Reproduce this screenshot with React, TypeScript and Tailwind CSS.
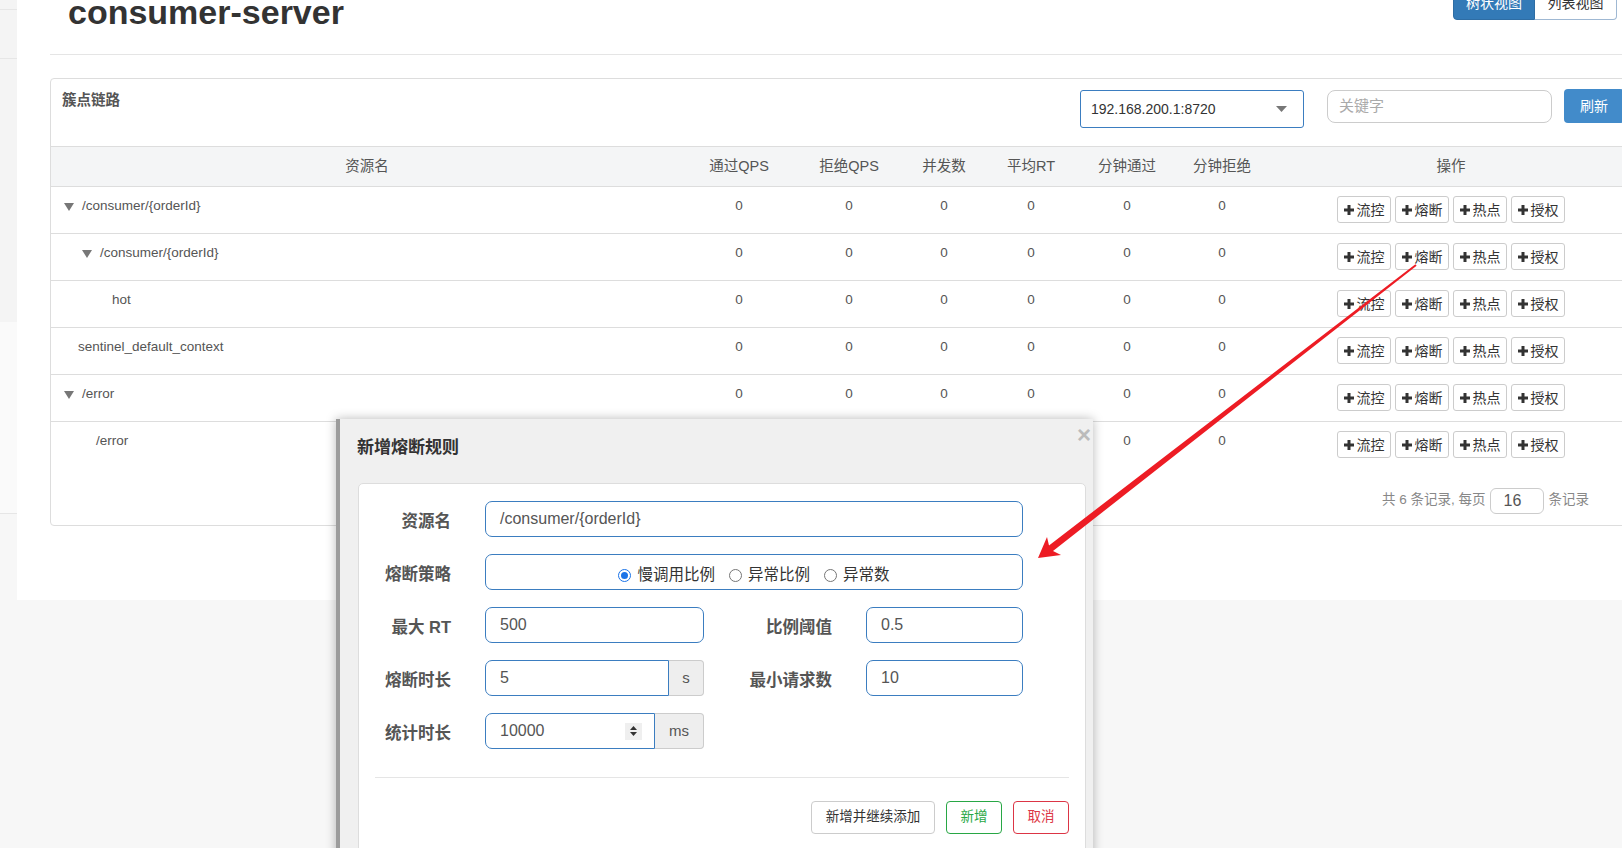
import React from "react";

const headers = ["资源名", "通过QPS", "拒绝QPS", "并发数", "平均RT", "分钟通过", "分钟拒绝", "操作"];

const rows = [
  { name: "/consumer/{orderId}", tri: true, pad: "pl-[13px]" },
  { name: "/consumer/{orderId}", tri: true, pad: "pl-[31px]" },
  { name: "hot", tri: false, pad: "pl-[61px]" },
  { name: "sentinel_default_context", tri: false, pad: "pl-[27px]" },
  { name: "/error", tri: true, pad: "pl-[13px]" },
  { name: "/error", tri: false, pad: "pl-[45px]" },
];

const cols = "grid grid-cols-[632px_112px_108px_82px_92px_100px_90px_368px]";

function Plus() {
  return (
    <svg width="10" height="10" viewBox="0 0 10 10" className="shrink-0">
      <rect x="3.5" y="0" width="3" height="10" fill="#333" />
      <rect x="0" y="3.5" width="10" height="3" fill="#333" />
    </svg>
  );
}

function Caret() {
  return (
    <svg width="10" height="8" viewBox="0 0 10 8" className="shrink-0 mt-[6px] mr-[8px]">
      <path d="M0 0h10L5 8z" fill="#777" />
    </svg>
  );
}

function OpButton({ label }: { label: string }) {
  return (
    <div className="flex h-[27px] w-[54px] items-center justify-center gap-[3px] rounded-[3px] border border-[#ccc] bg-white text-[14px] leading-none text-[#333]">
      <Plus />
      <span>{label}</span>
    </div>
  );
}

function Radio({ checked, label }: { checked?: boolean; label: string }) {
  return (
    <div className="flex items-center gap-[6px]">
      {checked ? (
        <span className="flex h-[13px] w-[13px] items-center justify-center rounded-full border-[1.5px] border-[#1a73e8] bg-white">
          <span className="h-[7px] w-[7px] rounded-full bg-[#1a73e8]" />
        </span>
      ) : (
        <span className="h-[13px] w-[13px] rounded-full border border-[#767676] bg-white" />
      )}
      <span className="text-[15.5px] leading-none text-[#333]">{label}</span>
    </div>
  );
}

function Label({ text, w }: { text: string; w: string }) {
  return <div className={`${w} mt-[5px] shrink-0 text-right text-[16.5px] font-bold leading-none text-[#555]`}>{text}</div>;
}

function LeftStrip() {
  return (
    <aside className="w-[17px] shrink-0">
      <div className="h-[322px] bg-[#f4f4f4]">
        <div className="h-[10px] border-b border-[#e6e6e6]" />
        <div className="h-[49px] border-b border-[#e6e6e6]" />
      </div>
      <div className="h-[192px] border-b border-[#e6e6e6] bg-[#fafafa]" />
    </aside>
  );
}

export default function App() {
  return (
    <div className="relative h-[848px] w-[1622px] overflow-hidden bg-[#f7f7f7] font-['Liberation_Sans','Noto_Sans_CJK_SC',sans-serif] text-[#555]">
      <div className="flex h-[600px]">
        <LeftStrip />
        <main className="min-w-0 flex-1 bg-white pl-[33px]">
          <header className="flex h-[55px] items-start justify-between border-b border-[#e5e5e5]">
            <h1 className="-mt-[5px] pl-[18px] text-[34px] font-bold leading-none text-[#333]">consumer-server</h1>
            <div className="-mt-[14px] mr-[5px] flex h-[34px] text-[14px]">
              <div className="flex w-[82px] items-center justify-center rounded-bl-[4px] border border-[#2e6da4] bg-[#337ab7] text-white">树状视图</div>
              <div className="flex w-[82px] items-center justify-center rounded-br-[4px] border border-l-0 border-[#9fb8d3] bg-white text-[#333]">列表视图</div>
            </div>
          </header>

          <section className="mt-[23px] w-[1586px] rounded-[4px] border border-[#ddd] bg-white">
            <div className="flex h-[67px] items-start justify-between px-[11px]">
              <div className="pt-[12px] text-[14.5px] font-bold leading-[18px] text-[#555]">簇点链路</div>
              <div className="mt-[11px] flex items-start">
                <div className="flex h-[38px] w-[224px] items-center justify-between rounded-[3px] border border-[#3b7dc0] pl-[10px] pr-[16px] text-[14px] text-[#333]">
                  <span>192.168.200.1:8720</span>
                  <svg width="11" height="6" viewBox="0 0 11 6">
                    <path d="M0 0h11L5.5 6z" fill="#777" />
                  </svg>
                </div>
                <div className="ml-[23px] flex h-[33px] w-[225px] items-center rounded-[8px] border border-[#ccc] pl-[11px] text-[15px] text-[#aaa]">关键字</div>
                <div className="-mt-[1px] ml-[12px] flex h-[34px] w-[60px] items-center justify-center rounded-[4px] bg-[#428bca] text-[14px] text-white">刷新</div>
              </div>
            </div>

            <div className={`${cols} h-[41px] items-center border-y border-[#ddd] bg-[#f4f5f6] text-[14.5px] text-[#555]`}>
              {headers.map((h) => (
                <div key={h} className="text-center">{h}</div>
              ))}
            </div>

            {rows.map((r, i) => (
              <div key={i} className={`${cols} h-[47px] text-[13.5px] leading-[18px] ${i < rows.length - 1 ? "border-b border-[#ddd]" : ""}`}>
                <div className={`flex items-start pt-[10px] ${r.pad}`}>
                  {r.tri && <Caret />}
                  <span>{r.name}</span>
                </div>
                {[0, 1, 2, 3, 4, 5].map((c) => (
                  <div key={c} className="pt-[10px] text-center">0</div>
                ))}
                <div className="flex justify-center gap-[4px] pt-[9px]">
                  <OpButton label="流控" />
                  <OpButton label="熔断" />
                  <OpButton label="热点" />
                  <OpButton label="授权" />
                </div>
              </div>
            ))}

            <div className="flex h-[56px] items-start justify-end pr-[46px] pt-[19px] text-[13.5px] text-[#888]">
              <span className="mt-[2px]">共 6 条记录, 每页</span>
              <div className="ml-[4px] flex h-[26px] w-[54px] items-center rounded-[6px] border border-[#ccc] pl-[13px] text-[16px] text-[#555]">16</div>
              <span className="ml-[5px] mt-[2px]">条记录</span>
            </div>
          </section>
        </main>
      </div>

      {/* modal */}
      <div className="absolute left-[336px] top-[419px] h-[440px] w-[757px] border-l-[4px] border-[#9c9c9c] bg-[#f0f0f0] shadow-[0_0_10px_rgba(0,0,0,0.28)]">
        <div className="h-[64px] pl-[17px] pt-[19px] text-[17px] font-bold leading-[20px] text-[#333]">新增熔断规则</div>
        <div className="absolute right-[2px] top-[4px] text-[24px] font-bold leading-none text-[#bbb]">×</div>

        <div className="ml-[18px] h-[380px] w-[728px] rounded-[5px] border border-[#ddd] bg-white pt-[17px]">
          <div className="flex h-[36px] items-center">
            <Label text="资源名" w="w-[92px]" />
            <div className="ml-[34px] flex h-[36px] w-[538px] items-center rounded-[7px] border border-[#3b7dc0] pl-[14px] text-[16px] text-[#555]">/consumer/{"{orderId}"}</div>
          </div>

          <div className="mt-[17px] flex h-[36px] items-center">
            <Label text="熔断策略" w="w-[92px]" />
            <div className="ml-[34px] flex h-[36px] w-[538px] items-center justify-center gap-[14px] rounded-[7px] border border-[#3b7dc0] pt-[6px]">
              <Radio checked label="慢调用比例" />
              <Radio label="异常比例" />
              <Radio label="异常数" />
            </div>
          </div>

          <div className="mt-[17px] flex h-[36px] items-center">
            <Label text="最大 RT" w="w-[92px]" />
            <div className="ml-[34px] flex h-[36px] w-[219px] items-center rounded-[7px] border border-[#3b7dc0] pl-[14px] text-[16px] text-[#555]">500</div>
            <Label text="比例阈值" w="w-[128px]" />
            <div className="ml-[34px] flex h-[36px] w-[157px] items-center rounded-[7px] border border-[#3b7dc0] pl-[14px] text-[16px] text-[#555]">0.5</div>
          </div>

          <div className="mt-[17px] flex h-[36px] items-center">
            <Label text="熔断时长" w="w-[92px]" />
            <div className="ml-[34px] flex h-[36px] w-[219px]">
              <div className="flex flex-1 items-center rounded-l-[7px] border border-[#3b7dc0] pl-[14px] text-[16px] text-[#555]">5</div>
              <div className="flex w-[35px] items-center justify-center rounded-r-[4px] border border-l-0 border-[#ccc] bg-[#eee] text-[15px] text-[#555]">s</div>
            </div>
            <Label text="最小请求数" w="w-[128px]" />
            <div className="ml-[34px] flex h-[36px] w-[157px] items-center rounded-[7px] border border-[#3b7dc0] pl-[14px] text-[16px] text-[#555]">10</div>
          </div>

          <div className="mt-[17px] flex h-[36px] items-center">
            <Label text="统计时长" w="w-[92px]" />
            <div className="ml-[34px] flex h-[36px] w-[219px]">
              <div className="flex flex-1 items-center justify-between rounded-l-[7px] border border-[#3b7dc0] pl-[14px] pr-[12px] text-[16px] text-[#555]">
                <span>10000</span>
                <span className="flex h-[17px] w-[17px] flex-col items-center justify-center gap-[2px] bg-[#efefef]">
                  <svg width="7" height="4" viewBox="0 0 7 4"><path d="M0 4h7L3.5 0z" fill="#333" /></svg>
                  <svg width="7" height="4" viewBox="0 0 7 4"><path d="M0 0h7L3.5 4z" fill="#333" /></svg>
                </span>
              </div>
              <div className="flex w-[49px] items-center justify-center rounded-r-[4px] border border-l-0 border-[#ccc] bg-[#eee] text-[15px] text-[#555]">ms</div>
            </div>
          </div>

          <div className="ml-[16px] mt-[28px] w-[694px] border-t border-[#e5e5e5]" />

          <div className="ml-[16px] mt-[23px] flex w-[694px] justify-end gap-[11px] text-[13.5px]">
            <div className="flex h-[33px] w-[124px] items-center justify-center rounded-[4px] border border-[#ccc] text-[#333]">新增并继续添加</div>
            <div className="flex h-[33px] w-[56px] items-center justify-center rounded-[4px] border border-[#28a745] text-[#28a745]">新增</div>
            <div className="flex h-[33px] w-[56px] items-center justify-center rounded-[4px] border border-[#dc3545] text-[#dc3545]">取消</div>
          </div>
        </div>
      </div>

      {/* red annotation arrow */}
      <svg className="pointer-events-none absolute left-0 top-0" width="1622" height="848" viewBox="0 0 1622 848">
        <polygon
          points="1038,558 1061,555 1053,551 1416.6,265.8 1415.4,264.2 1049,545.4 1047,537"
          fill="#ed1c24"
        />
      </svg>
    </div>
  );
}
